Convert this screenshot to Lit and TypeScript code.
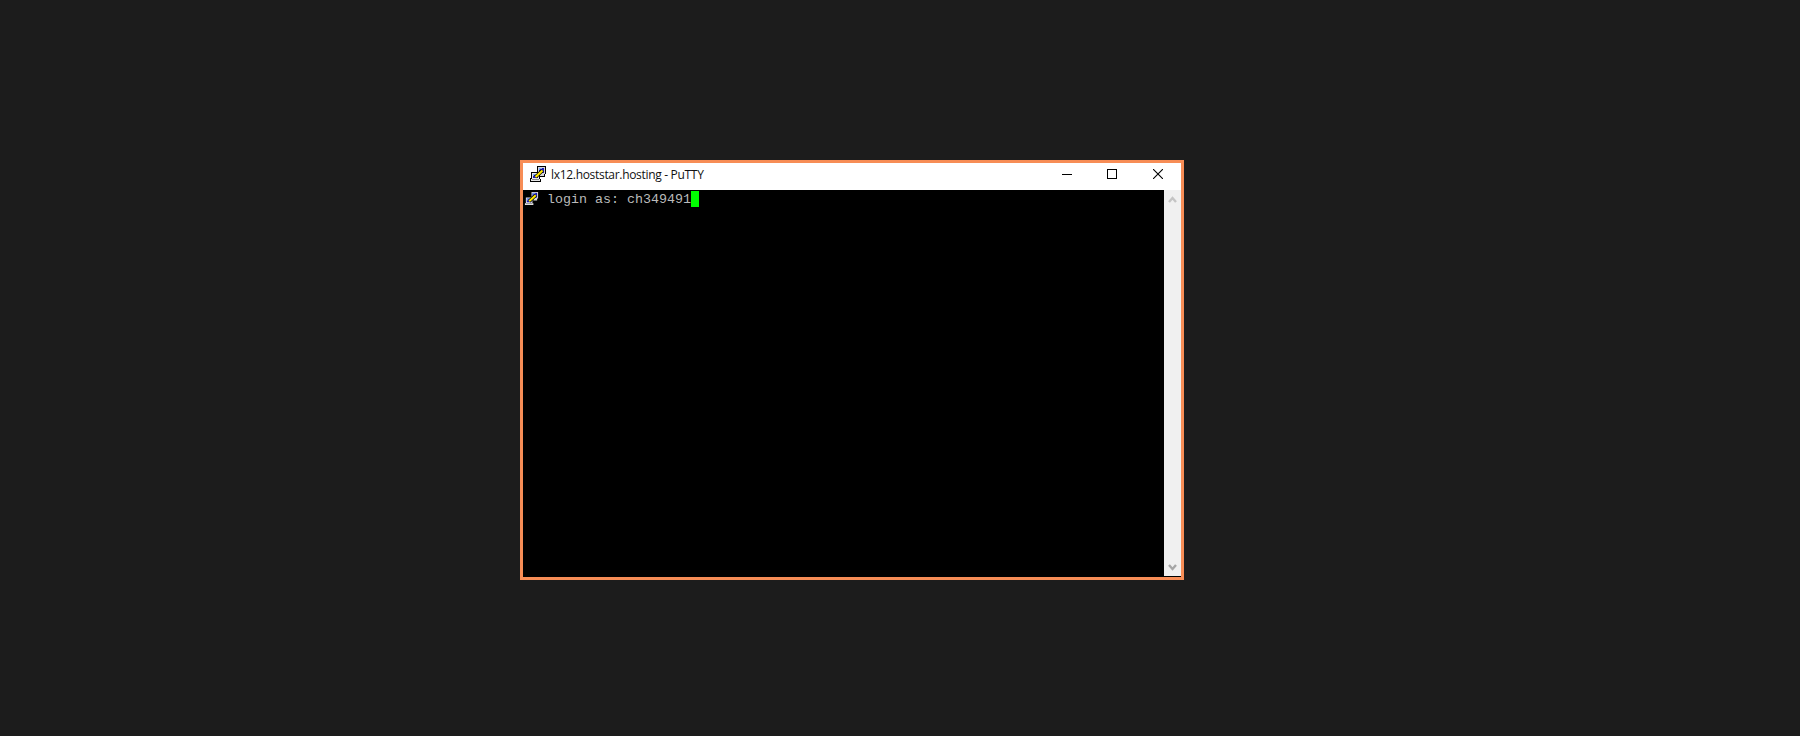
import { LitElement, html, css, svg } from "lit";
import { customElement } from "lit/decorators.js";

const iconShape = svg`
  <path fill="#000" d="M7 0h9v8h-1v3H8v-1H7z"/>
  <path fill="#d8d8d8" d="M8 1h7v7h-1v2H9V9H8z"/>
  <path fill="#1a1ab8" d="M9 2h5v5H9z"/>
  <path fill="#7fa8f4" d="M9 2h3v1h-2v1H9z"/>
  <path fill="#000" d="M1 6h9v7h1v3H0v-4h1z"/>
  <path fill="#e8e8e8" d="M2 7h7v6h1v2H1v-2h1z"/>
  <path fill="#1a1ab8" d="M3 8h5v4H3z"/>
  <path fill="#7fa8f4" d="M3 8h3v1H4v1H3z"/>
  <path fill="#8a8a8a" d="M2 13h7v1H2z"/>
  <path d="M5.500 11L12.500 4.500" fill="none" stroke="#000" stroke-width="3.600"/>
  <path d="M5.500 11L12.500 4.500" fill="none" stroke="#ffe800" stroke-width="2.200"/>
`;

const titleIcon = svg`<svg class="icon" viewBox="0 0 16 16" width="16" height="16">${iconShape}</svg>`;
const termIcon = svg`<svg class="icon" viewBox="0 0 16 16" width="15" height="15">${iconShape}</svg>`;

@customElement("app-root")
export class AppRoot extends LitElement {
  static styles = css`
    :host {
      display: block;
      width: 1800px;
      height: 736px;
      box-sizing: border-box;
      padding: 160px 0 0 520px;
      background: #1c1c1c;
      overflow: hidden;
    }
    .window {
      width: 664px;
      height: 420px;
      box-sizing: border-box;
      border: 3px solid #f78d56;
      background: #fff;
      display: flex;
      flex-direction: column;
    }
    .titlebar {
      height: 27px;
      flex: none;
      display: flex;
      align-items: center;
      background: #fff;
    }
    .app-icon {
      display: flex;
      margin-left: 7px;
      margin-right: 5px;
      margin-bottom: 5px;
    }
    .title {
      font: 12px/16px "Open Sans", "Noto Sans", sans-serif;
      color: #111;
      white-space: nowrap;
      flex: 1;
      letter-spacing: -0.31px;
      margin-bottom: 4px;
    }
    .controls {
      display: flex;
      height: 100%;
      box-sizing: border-box;
      padding-bottom: 5px;
    }
    .ctl {
      width: 46px;
      display: flex;
      align-items: center;
      justify-content: center;
    }
    .body {
      flex: 1;
      display: flex;
      min-height: 0;
      background: #000;
    }
    .terminal {
      flex: 1;
      background: #000;
      display: flex;
      align-items: flex-start;
      padding-left: 1px;
    }
    .term-icon {
      display: flex;
      margin-top: 1px;
      margin-right: 8px;
    }
    .line {
      display: flex;
      align-items: flex-start;
      height: 16px;
      margin-top: 1px;
    }
    .text {
      font: 13.333px/18px "Liberation Mono", monospace;
      color: #bbbbbb;
      white-space: pre;
    }
    .cursor {
      width: 8px;
      height: 16px;
      background: #00ff00;
    }
    .scrollbar {
      width: 17px;
      flex: none;
      background: #f0f0f0;
      display: flex;
      flex-direction: column;
      justify-content: space-between;
      align-items: center;
      padding: 6px 0 5px;
      margin-bottom: 1px;
      box-sizing: border-box;
    }
    .scrollbar svg { display: block; }
    .icon { display: block; }
  `;

  render() {
    return html`
      <div class="window">
        <div class="titlebar">
          <span class="app-icon">${titleIcon}</span>
          <span class="title">lx12.hoststar.hosting - PuTTY</span>
          <div class="controls">
            <div class="ctl">
              <svg width="12" height="10" viewBox="0 0 12 10" shape-rendering="crispEdges"><path d="M2 5h10v1H2z" fill="#000"/></svg>
            </div>
            <div class="ctl">
              <svg width="10" height="10" viewBox="0 0 10 10" shape-rendering="crispEdges"><path d="M.5.5h9v9h-9z" fill="none" stroke="#000"/></svg>
            </div>
            <div class="ctl">
              <svg width="10" height="10" viewBox="0 0 10 10"><path d="M0 0l10 10M10 0L0 10" fill="none" stroke="#000" stroke-width="1.1"/></svg>
            </div>
          </div>
        </div>
        <div class="body">
          <div class="terminal">
            <span class="term-icon">${termIcon}</span>
            <div class="line"><span class="text">login as: ch349491</span><span class="cursor"></span></div>
          </div>
          <div class="scrollbar">
            <svg width="9" height="7" viewBox="0 0 9 7"><path d="M1 6l3.500-4L8 6" fill="none" stroke="#c4c4c4" stroke-width="2.400"/></svg>
            <svg width="9" height="7" viewBox="0 0 9 7"><path d="M1 1l3.500 4L8 1" fill="none" stroke="#a6a6a6" stroke-width="2.400"/></svg>
          </div>
        </div>
      </div>
    `;
  }
}
